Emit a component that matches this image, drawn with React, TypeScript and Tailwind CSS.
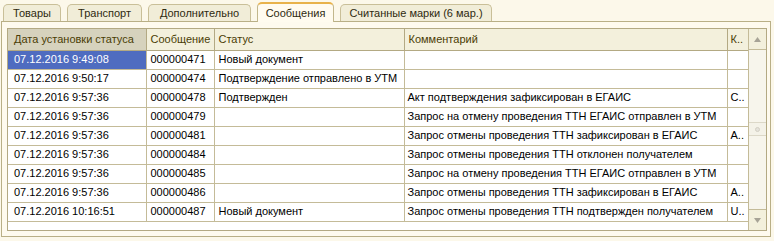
import React from "react";

interface Row {
  date: string;
  num: string;
  status: string;
  comment: string;
  k: string;
}

const TABS = [
  { label: "Товары", w: "w-[58px]" },
  { label: "Транспорт", w: "w-[75px]" },
  { label: "Дополнительно", w: "w-[103px]" },
  { label: "Сообщения", w: "w-[77px]", active: true },
  { label: "Считанные марки (6 мар.)", w: "w-[152px]" },
];

const ROWS: Row[] = [
  { date: "07.12.2016 9:49:08", num: "000000471", status: "Новый документ", comment: "", k: "" },
  { date: "07.12.2016 9:50:17", num: "000000474", status: "Подтверждение отправлено в УТМ", comment: "", k: "" },
  { date: "07.12.2016 9:57:36", num: "000000478", status: "Подтвержден", comment: "Акт подтверждения зафиксирован в ЕГАИС", k: "С.." },
  { date: "07.12.2016 9:57:36", num: "000000479", status: "", comment: "Запрос на отмену проведения ТТН ЕГАИС отправлен в УТМ", k: "" },
  { date: "07.12.2016 9:57:36", num: "000000481", status: "", comment: "Запрос отмены проведения ТТН зафиксирован в ЕГАИС", k: "А.." },
  { date: "07.12.2016 9:57:36", num: "000000484", status: "", comment: "Запрос отмены проведения ТТН отклонен получателем", k: "" },
  { date: "07.12.2016 9:57:36", num: "000000485", status: "", comment: "Запрос на отмену проведения ТТН ЕГАИС отправлен в УТМ", k: "" },
  { date: "07.12.2016 9:57:36", num: "000000486", status: "", comment: "Запрос отмены проведения ТТН зафиксирован в ЕГАИС", k: "А.." },
  { date: "07.12.2016 10:16:51", num: "000000487", status: "Новый документ", comment: "Запрос отмены проведения ТТН подтвержден получателем", k: "U.." },
];

export default function App() {
  return (
    <div
      className="w-[774px] h-[241px] bg-[#fcf8ea] pl-[1px] pr-[3px] pt-[2px] pb-[4px] flex flex-col text-[11px] leading-none overflow-hidden"
      style={{ fontFamily: '"Liberation Sans", Arial, sans-serif' }}
    >
      {/* вкладки */}
      <div className="flex items-end gap-[6px] pl-[2px] h-[19px] shrink-0">
        {TABS.map((t) =>
          t.active ? (
            <div
              key={t.label}
              className={`${t.w} h-[20px] -mb-[1px] relative z-10 rounded-t-[5px] border border-b-0 border-[#c2b78c] border-t-[#e8b24a] border-t-2 bg-[#fffbef] flex items-center justify-center text-[#2e2a10]`}
            >
              {t.label}
            </div>
          ) : (
            <div
              key={t.label}
              className={`${t.w} h-[17px] rounded-t-[5px] border border-b-0 border-[#c9bf98] bg-[#f1edd8] flex items-center justify-center text-[#2e2a10]`}
            >
              {t.label}
            </div>
          )
        )}
      </div>

      {/* панель */}
      <div className="flex-1 border border-[#b9af86] bg-[#fefaee] pt-[6px] pl-[5px] pr-[4px] pb-[5px] flex">
        <div className="flex-1 flex border border-[#b3a983] bg-white">
          <div className="flex-1 overflow-hidden">
            <table className="w-full table-fixed border-collapse text-black">
              <colgroup>
                <col className="w-[138px]" />
                <col className="w-[68px]" />
                <col className="w-[190px]" />
                <col className="w-[323px]" />
                <col className="w-[21px]" />
              </colgroup>
              <thead>
                <tr className="h-[21px] text-[#4a3d05]">
                  <th className="bg-[#d6d2bd] border-b border-r border-[#b3a983] text-left font-normal pl-[6px] whitespace-nowrap overflow-hidden">
                    Дата установки статуса
                  </th>
                  <th className="bg-[#f3f0dc] border-b border-r border-[#b3a983] text-left font-normal pl-[4px] whitespace-nowrap overflow-hidden">
                    Сообщение
                  </th>
                  <th className="bg-[#f3f0dc] border-b border-r border-[#b3a983] text-left font-normal pl-[4px] whitespace-nowrap overflow-hidden">
                    Статус
                  </th>
                  <th className="bg-[#f3f0dc] border-b border-r border-[#b3a983] text-left font-normal pl-[4px] whitespace-nowrap overflow-hidden">
                    Комментарий
                  </th>
                  <th className="bg-[#f3f0dc] border-b border-[#b3a983] text-left font-normal pl-[3px] whitespace-nowrap overflow-hidden">
                    К..
                  </th>
                </tr>
              </thead>
              <tbody>
                {ROWS.map((r, i) => (
                  <tr key={i} className="h-[19px]">
                    <td
                      className={
                        "border-b border-r border-[#c4bb98] pl-[6px] whitespace-nowrap overflow-hidden " +
                        (i === 0 ? "bg-[#4f6cc0] text-white" : "")
                      }
                    >
                      {r.date}
                    </td>
                    <td className="border-b border-r border-[#c4bb98] pl-[4px] whitespace-nowrap overflow-hidden">
                      {r.num}
                    </td>
                    <td className="border-b border-r border-[#c4bb98] pl-[4px] whitespace-nowrap overflow-hidden">
                      {r.status}
                    </td>
                    <td className="border-b border-r border-[#c4bb98] pl-[3px] whitespace-nowrap overflow-hidden">
                      {r.comment}
                    </td>
                    <td className="border-b border-[#c4bb98] pl-[3px] whitespace-nowrap overflow-hidden">
                      {r.k}
                    </td>
                  </tr>
                ))}
              </tbody>
            </table>
          </div>

          {/* полоса прокрутки */}
          <div className="w-[18px] shrink-0 border-l border-[#c4bb98] bg-[#f7f5ec] flex flex-col">
            <div className="h-[21px] border-b border-[#c4bb98] bg-[#f3f0dc] flex items-center justify-center">
              <svg width="7" height="5" viewBox="0 0 7 5">
                <path d="M3.5 0L7 5H0z" fill="#a7a396" />
              </svg>
            </div>
            <div className="flex-1 flex flex-col">
              <div className="h-[72px]" />
              <div className="h-[14px] border-y border-[#dcd8c8] bg-[#f4f2e8] flex items-center justify-center">
                <div className="w-[5px] h-[5px] rounded-full bg-[#e4e2da] border border-[#d2cfc4]" />
              </div>
              <div className="flex-1" />
            </div>
            <div className="h-[21px] border-t border-[#c4bb98] bg-[#f3f0dc] flex items-center justify-center">
              <svg width="7" height="5" viewBox="0 0 7 5">
                <path d="M0 0H7L3.5 5z" fill="#a7a396" />
              </svg>
            </div>
          </div>
        </div>
      </div>
    </div>
  );
}
